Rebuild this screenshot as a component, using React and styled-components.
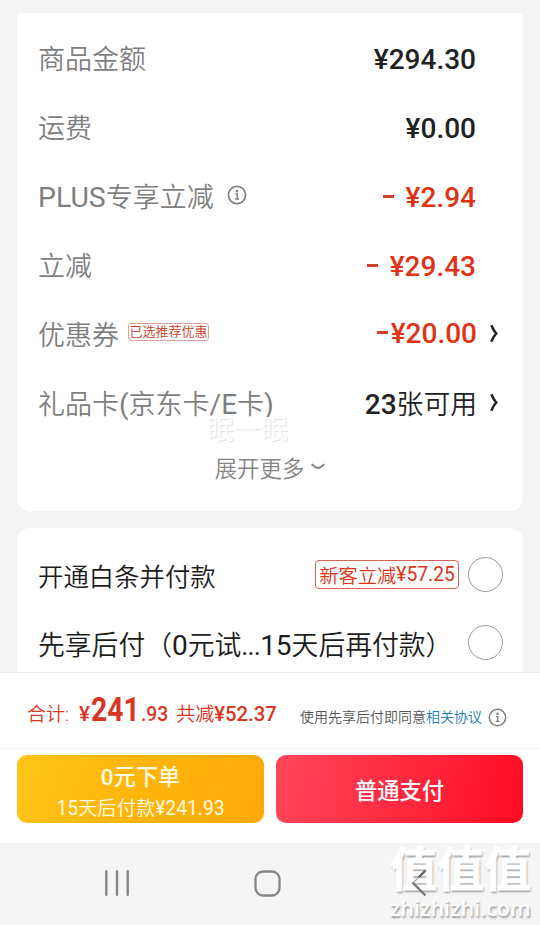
import React from "react";
import styled, { createGlobalStyle, css } from "styled-components";

const Global = createGlobalStyle`
  *, *::before, *::after { box-sizing: border-box; }
  html, body { margin: 0; padding: 0; background: #f4f4f4; }
  body { font-family: Roboto, "Noto Sans CJK SC", sans-serif; overflow: hidden; }
`;

const Screen = styled.div`
  position: relative;
  width: 540px;
  height: 925px;
  display: flex;
  flex-direction: column;
  background: #f4f4f4;
  overflow: hidden;
  white-space: nowrap;
`;

const Content = styled.main`
  height: 672px;
  padding: 13px 17px 0;
  display: flex;
  flex-direction: column;
  gap: 17px;
  overflow: hidden;
`;

const Card = styled.section`
  position: relative;
  flex: none;
  background: #fff;
  border-radius: ${(p) => p.$radius || "13px"};
  height: ${(p) => p.$height}px;
  padding: ${(p) => p.$pad};
`;

const SummaryRow = styled.div`
  height: 69px;
  display: flex;
  align-items: center;
`;

const Label = styled.span`
  font-size: 27px;
  font-weight: 350;
  line-height: 40px;
  color: #7f7f7f;
`;

const Latin = styled.span`
  font-weight: 400;
  font-size: ${(p) => (p.$size ? `${p.$size}px` : "inherit")};
`;

const InfoSlot = styled.span`
  display: flex;
  margin: -5px 0 0 13px;
`;

const Tag = styled.span`
  height: 18px;
  width: 81px;
  margin: -8px 0 0 9px;
  display: flex;
  align-items: center;
  justify-content: center;
  border: 1px solid #e0a595;
  border-radius: 3px;
  color: #c93a1c;
  font-size: 13px;
  font-weight: 350;
  line-height: 16px;
`;

const Amount = styled.span`
  margin-left: auto;
  margin-top: ${(p) => p.$lift || 0}px;
  margin-right: ${(p) => p.$inset ?? 1}px;
  font-size: 28px;
  line-height: 40px;
  font-weight: 500;
  color: ${(p) => (p.$red ? "#dd3415" : "#222")};
`;

const Dash = styled.i`
  display: inline-block;
  width: 11px;
  height: 3px;
  margin-right: ${(p) => p.$gap}px;
  vertical-align: 9px;
  background: #d2402a;
`;

const CountText = styled.span`
  font-size: 26.8px;
  font-weight: 350;
`;

const ArrowSlot = styled.span`
  width: 29px;
  margin-right: -29px;
  padding-left: 13px;
  display: flex;
  margin-top: -5px;
`;

const ExpandRow = styled.div`
  height: 56px;
  padding-left: 25px;
  display: flex;
  justify-content: center;
  align-items: center;
  gap: 7px;
  color: #858585;
  font-size: 22.4px;
  font-weight: 350;
`;

const GhostMark = styled.span`
  position: absolute;
  left: 190px;
  top: 404px;
  font-size: 27px;
  line-height: 27px;
  color: #fff;
  text-shadow: 1px 1px 1px #e0e0e0;
`;

const PayRow = styled.div`
  height: 69px;
  display: flex;
  align-items: center;
  color: #1d1d1d;
`;

const PayName = styled.span`
  font-size: ${(p) => p.$size}px;
  font-weight: 350;
  line-height: 40px;
`;

const Ellipsis = styled.span`
  font-weight: 400;
  letter-spacing: -0.8px;
`;

const PayTag = styled.span`
  height: 29px;
  width: 144px;
  margin: -4px 9px 0 auto;
  display: flex;
  justify-content: center;
  align-items: center;
  border: 1px solid #d5644e;
  border-radius: 4px;
  color: #dc3517;
  font-size: 19.3px;
  font-weight: 350;
`;

const Radio = styled.span`
  flex: none;
  width: 35px;
  height: 35px;
  margin-top: ${(p) => p.$lift}px;
  margin-left: ${(p) => (p.$push ? "auto" : "0")};
  border: 1.5px solid #999;
  border-radius: 50%;
`;

const Footer = styled.footer`
  height: 171px;
  background: #fff;
  border-top: 1px solid #eee;
`;

const TotalBar = styled.div`
  height: 76px;
  padding: 0 33px 0 27px;
  display: flex;
  align-items: baseline;
  border-bottom: 1px solid #f6f6f6;
  line-height: 73px;
  color: #d93522;
`;

const TotalText = styled.span`
  font-size: ${(p) => p.$size}px;
  font-weight: ${(p) => p.$weight || 350};
  margin-left: ${(p) => p.$gap || 0}px;
`;

const TotalWhole = styled.span`
  width: 48px;
  margin-left: 1px;
  font-size: 34px;
  font-weight: 700;
  transform: scaleX(0.83);
  transform-origin: left;
`;

const Agreement = styled.span`
  margin-left: auto;
  display: flex;
  align-items: center;
  align-self: flex-start;
  height: 88px;
  font-size: 14px;
  font-weight: 350;
  line-height: 20px;
  color: #555;
`;

const Link = styled.span`
  color: #1b7fb8;
  margin-right: 6px;
`;

const Buttons = styled.div`
  padding: 6px 17px 0;
  display: grid;
  grid-template-columns: 247px 247px;
  gap: 12px;
`;

const kinds = {
  later: css`
    background: linear-gradient(110deg, #ffc51a, #ffb40c 50%, #ffa90b);
    color: #fffbe0;
    padding-top: 7px;
  `,
  pay: css`
    background: linear-gradient(100deg, #ff465c, #ff2a40 50%, #ff0c21);
    color: #fff;
    padding-top: 4px;
  `,
};

const PayButton = styled.button`
  height: 68px;
  padding: 0;
  border: 0;
  border-radius: 10px;
  display: flex;
  flex-direction: column;
  align-items: center;
  justify-content: center;
  font-family: inherit;
  font-size: 22.3px;
  font-weight: 500;
  line-height: 31px;
  ${(p) => kinds[p.$kind]}
`;

const ButtonNote = styled.span`
  font-size: 19.3px;
  font-weight: 350;
`;

const NavBar = styled.nav`
  height: 82px;
  display: flex;
  align-items: center;
  padding: 0 0 2px 104px;
  background: #f5f5f5;
`;

const NavSlot = styled.span`
  width: ${(p) => p.$width}px;
  display: flex;
`;

const BackMark = styled.svg`
  position: absolute;
  left: 411px;
  top: 869px;
`;

const SiteMark = styled.div`
  position: absolute;
  left: 390px;
  top: 844px;
  width: 145px;
  color: #fff;
  text-shadow: 1px 2px 2px #999;
`;

const SiteName = styled.div`
  font-size: 47px;
  line-height: 51px;
  font-weight: 700;
  -webkit-text-stroke: 1px #fff;
`;

const SiteUrl = styled.div`
  font-family: "Open Sans", sans-serif;
  font-size: 21.6px;
  line-height: 25px;
  font-weight: 600;
`;

const InfoIcon = ({ size }) => (
  <svg width={size} height={size} viewBox="0 0 20 20" fill="none" stroke="#7d7d7d" strokeWidth="1.6">
    <circle cx="10" cy="10" r="8.6" />
    <path d="M8.4 9h1.8v5M8.2 14h3.8" strokeWidth="1.4" />
    <circle cx="10" cy="6.1" r=".5" fill="#7d7d7d" />
  </svg>
);

const Arrow = () => (
  <ArrowSlot>
    <svg width="10" height="19" viewBox="0 0 10 19" fill="none" stroke="#222" strokeWidth="2.5">
      <path d="M1.3 1.2Q3.5 6.5 6.3 9.5Q3.5 12.5 1.3 17.8" />
    </svg>
  </ArrowSlot>
);

export default function App() {
  return (
    <Screen>
      <Global />
      <Content>
        <Card $height={498} $pad="12px 46px 0 21px" $radius="5px 5px 13px 13px">
          <SummaryRow>
            <Label>商品金额</Label>
            <Amount>¥294.30</Amount>
          </SummaryRow>
          <SummaryRow>
            <Label>运费</Label>
            <Amount>¥0.00</Amount>
          </SummaryRow>
          <SummaryRow>
            <Label><Latin $size={28.4}>PLUS</Latin>专享立减</Label>
            <InfoSlot><InfoIcon size={20} /></InfoSlot>
            <Amount $red><Dash $gap={12} />¥2.94</Amount>
          </SummaryRow>
          <SummaryRow>
            <Label>立减</Label>
            <Amount $red><Dash $gap={12} />¥29.43</Amount>
          </SummaryRow>
          <SummaryRow>
            <Label>优惠券</Label>
            <Tag>已选推荐优惠</Tag>
            <Amount $red $lift={-3} $inset={0}><Dash $gap={3} />¥20.00</Amount>
            <Arrow />
          </SummaryRow>
          <SummaryRow>
            <Label>
              礼品卡<Latin $size={28}>(</Latin>京东卡<Latin $size={28}>/E</Latin>卡<Latin $size={28}>)</Latin>
            </Label>
            <Amount $inset={0}>23<CountText>张可用</CountText></Amount>
            <Arrow />
          </SummaryRow>
          <ExpandRow>
            展开更多
            <svg width="14" height="8" viewBox="0 0 14 8" fill="none" stroke="#888" strokeWidth="2">
              <path d="M.7 1.2Q4 4.2 7 5.2Q10 4.2 13.3 1.2" />
            </svg>
          </ExpandRow>
          <GhostMark>眠一眠</GhostMark>
        </Card>
        <Card $height={170} $pad="14px 20px 0 21px">
          <PayRow>
            <PayName $size={25.4}>开通白条并付款</PayName>
            <PayTag>新客立减<Latin>¥57.25</Latin></PayTag>
            <Radio $lift={-4} />
          </PayRow>
          <PayRow>
            <PayName $size={26.8}>
              先享后付（<Latin $size={28}>0</Latin>元试<Ellipsis>...</Ellipsis><Latin $size={28}>15</Latin>天后再付款）
            </PayName>
            <Radio $lift={-6} $push />
          </PayRow>
        </Card>
      </Content>
      <Footer>
        <TotalBar>
          <TotalText $size={19}>合计:</TotalText>
          <TotalText $size={20.5} $weight={500} $gap={10}>¥</TotalText>
          <TotalWhole>241</TotalWhole>
          <TotalText $size={19.3} $weight={500} $gap={2}>.93</TotalText>
          <TotalText $size={19} $gap={8}>共减</TotalText>
          <TotalText $size={20.3} $weight={500}>¥52.37</TotalText>
          <Agreement>
            使用先享后付即同意<Link>相关协议</Link>
            <InfoIcon size={19} />
          </Agreement>
        </TotalBar>
        <Buttons>
          <PayButton $kind="later">
            0元下单
            <ButtonNote><Latin>15</Latin>天后付款<Latin>¥241.93</Latin></ButtonNote>
          </PayButton>
          <PayButton $kind="pay">普通支付</PayButton>
        </Buttons>
      </Footer>
      <NavBar>
        <NavSlot $width={150}>
          <svg width="26" height="26" viewBox="0 0 26 26" stroke="#858585" strokeWidth="2.4" strokeLinecap="round">
            <path d="M2.3 1.2v23.6M13 1.2v23.6M23.7 1.2v23.6" />
          </svg>
        </NavSlot>
        <NavSlot $width={158}>
          <svg width="27" height="27" viewBox="0 0 27 27" fill="none" stroke="#858585" strokeWidth="2.3">
            <rect x="1.5" y="1.5" width="24" height="24" rx="7.5" />
          </svg>
        </NavSlot>
      </NavBar>
      <SiteMark>
        <SiteName>值值值</SiteName>
        <SiteUrl>zhizhizhi.com</SiteUrl>
      </SiteMark>
      <BackMark width="16" height="28" viewBox="0 0 16 28" fill="none" strokeWidth="2.4">
        <path stroke="#666" d="M14.5 1.5L7.5 8.5" />
        <path stroke="#aaa" strokeWidth="1.2" d="M7.5 8.5L2 14" />
        <path stroke="#777" d="M1.5 13.5L14.5 26.5" />
      </BackMark>
    </Screen>
  );
}
